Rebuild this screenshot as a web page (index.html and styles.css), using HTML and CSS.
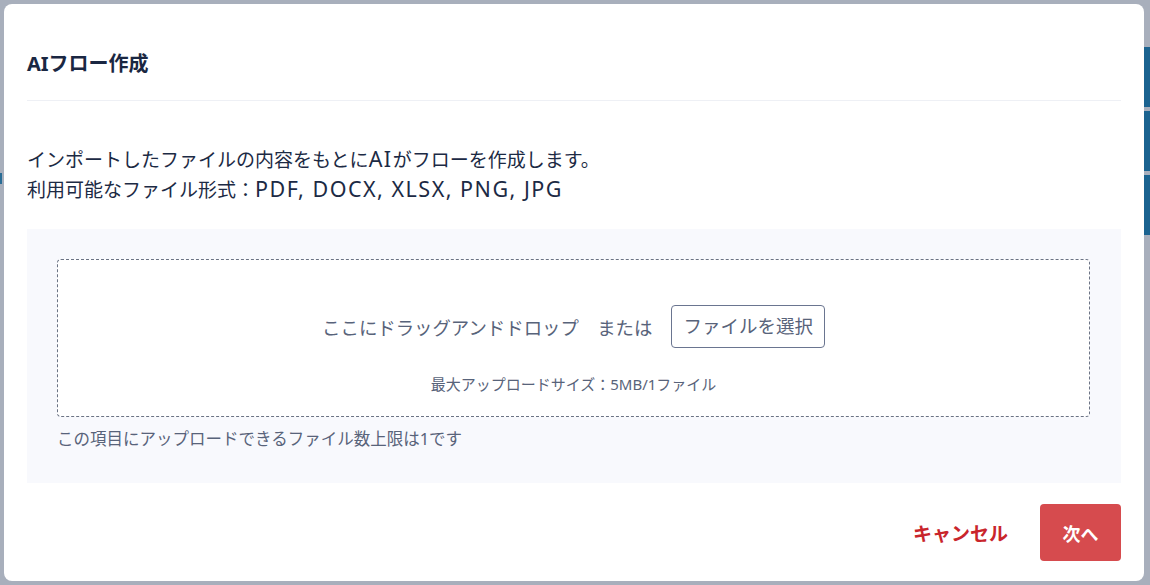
FILE: index.html
```html
<!DOCTYPE html>
<html lang="ja">
<head>
<meta charset="utf-8">
<title>AIフロー作成</title>
<link rel="stylesheet" href="styles.css">
</head>
<body>
<div class="backdrop">
  <div class="side-left"><span class="mark"></span></div>
  <div class="modal">
    <div class="modal-header">
      <h2 class="modal-title">AIフロー作成</h2>
    </div>
    <div class="modal-body">
      <p class="desc">インポートしたファイルの内容をもとに<span class="en">AI</span>がフローを作成します。<br>利用可能なファイル形式：<span class="en">PDF, DOCX, XLSX, PNG, JPG</span></p>
      <div class="upload-area">
        <div class="dropzone">
          <div class="drop-row">
            <span class="drop-text">ここにドラッグアンドドロップ　または</span>
            <button class="select-btn" type="button">ファイルを選択</button>
          </div>
          <div class="max-size">最大アップロードサイズ：5MB/1ファイル</div>
        </div>
        <div class="limit-note">この項目にアップロードできるファイル数上限は1です</div>
      </div>
    </div>
    <div class="modal-footer">
      <button class="cancel-btn" type="button">キャンセル</button>
      <button class="next-btn" type="button">次へ</button>
    </div>
  </div>
  <div class="side-right">
    <span class="tab"></span>
    <span class="tab"></span>
    <span class="tab"></span>
  </div>
</div>
</body>
</html>
```

FILE: styles.css
```css
* { box-sizing: border-box; }
html, body {
  margin: 0;
  padding: 0;
  width: 1150px;
  height: 585px;
  overflow: hidden;
}
body {
  background: #a8afbc;
  font-family: "Noto Sans", "Noto Sans CJK JP", sans-serif;
  color: #1c2a44;
}
.backdrop {
  display: flex;
  height: 585px;
  padding: 4px 0;
}
.side-left {
  width: 4px;
  flex: none;
  position: relative;
}
.side-left .mark {
  position: absolute;
  left: 0;
  top: 169px;
  width: 2px;
  height: 11px;
  background: #2a6d96;
}
.modal {
  width: 1140px;
  height: 577px;
  flex: none;
  background: #fff;
  border-radius: 8px;
  padding: 0 23px;
  display: flex;
  flex-direction: column;
}
.modal-header {
  padding-top: 46px;
  padding-bottom: 22px;
  border-bottom: 1px solid #eef0f5;
}
.modal-title {
  margin: 0;
  font-size: 20px;
  line-height: 28px;
  font-weight: 700;
  color: #1a2742;
}
.modal-body {
  padding-top: 44px;
}
.desc {
  margin: 0;
  font-size: 19px;
  line-height: 30px;
  color: #1c2a44;
}
.desc .en {
  font-size: 21.5px;
  line-height: 1;
  letter-spacing: 1.5px;
}
.upload-area {
  margin-top: 24px;
  background: #f8f9fd;
  padding: 30px 31px 0 30px;
  height: 254px;
}
.dropzone {
  height: 158px;
  border: 1px dashed #6b7384;
  border-radius: 4px;
  background: #fff;
  display: flex;
  flex-direction: column;
  align-items: center;
  padding-top: 45px;
}
.drop-row {
  display: flex;
  align-items: center;
  gap: 19px;
}
.drop-text {
  font-size: 18.4px;
  color: #58637a;
}
.select-btn {
  font-family: inherit;
  font-size: 18.5px;
  color: #58637a;
  background: #fff;
  border: 1px solid #6a7590;
  border-radius: 4px;
  height: 43px;
  padding: 0 11px;
  line-height: 1;
}
.max-size {
  margin-top: 26px;
  font-size: 15px;
  line-height: 20px;
  color: #58637a;
}
.limit-note {
  margin-top: 12px;
  font-size: 16.5px;
  line-height: 20px;
  color: #58637a;
}
.modal-footer {
  margin-top: auto;
  padding-bottom: 20px;
  display: flex;
  justify-content: flex-end;
  align-items: center;
  gap: 32px;
}
.cancel-btn {
  font-family: inherit;
  background: none;
  border: none;
  padding: 0;
  font-size: 19px;
  font-weight: 700;
  color: #c9252c;
}
.next-btn {
  font-family: inherit;
  width: 81px;
  height: 57px;
  background: #d64b4e;
  border: none;
  border-radius: 4px;
  color: #fff;
  font-size: 18px;
  font-weight: 700;
}
.side-right {
  width: 6px;
  flex: none;
  display: flex;
  flex-direction: column;
  gap: 4px;
  padding-top: 43px;
}
.tab {
  display: block;
  height: 60px;
  background: #1b6390;
}
```
